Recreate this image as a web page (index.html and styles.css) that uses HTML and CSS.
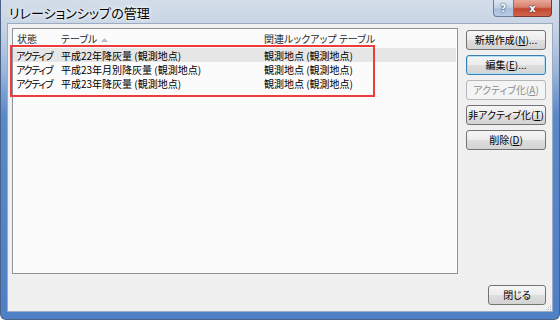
FILE: index.html
```html
<!DOCTYPE html>
<html lang="ja">
	<head>
		<meta charset="UTF-8" />
		<meta name="viewport" content="width=device-width, initial-scale=1.0" />
		<title>リレーションシップの管理</title>
		<link rel="stylesheet" href="styles.css">
	</head>
	<body>
		<div class="window">
			<div class="titleBar">
				<span class="titleText">リレーションシップの管理</span>
				<div class="captionButtons">
					<span class="captionHelp">?</span>
					<span class="captionClose">x</span>
				</div>
			</div>
			<div class="client">
				<div class="mainRow">
					<div class="listBox">
						<div class="listRow listHeader">
							<span>状態</span>
							<span>テーブル<svg class="sortArrow" width="7" height="4" viewBox="0 0 7 4"><path d="M0 4 L3.5 0 L7 4 Z" /></svg></span>
							<span>関連ルックアップ テーブル</span>
						</div>
						<div class="listRow selected">
							<span class="stateCell">アクティブ</span>
							<span>平成22年降灰量 (観測地点)</span>
							<span>観測地点 (観測地点)</span>
						</div>
						<div class="listRow">
							<span class="stateCell">アクティブ</span>
							<span>平成23年月別降灰量 (観測地点)</span>
							<span>観測地点 (観測地点)</span>
						</div>
						<div class="listRow">
							<span class="stateCell">アクティブ</span>
							<span>平成23年降灰量 (観測地点)</span>
							<span>観測地点 (観測地点)</span>
						</div>
						<div class="markBox"></div>
					</div>
					<div class="buttonColumn">
						<button class="btn">新規作成(<u>N</u>)...</button>
						<button class="btn focused">編集(<u>E</u>)...</button>
						<button class="btn" disabled>アクティブ化(<u>A</u>)</button>
						<button class="btn">非アクティブ化(<u>T</u>)</button>
						<button class="btn">削除(<u>D</u>)</button>
					</div>
				</div>
				<div class="footerRow">
					<button class="btn closeBtn">閉じる</button>
				</div>
				<svg class="sizeGrip" width="5" height="5" viewBox="0 0 5 5">
					<rect x="4" y="0" width="1" height="1" />
					<rect x="2" y="2" width="1" height="1" />
					<rect x="4" y="2" width="1" height="1" />
					<rect x="0" y="4" width="1" height="1" />
					<rect x="2" y="4" width="1" height="1" />
					<rect x="4" y="4" width="1" height="1" />
				</svg>
			</div>
		</div>
	</body>
</html>
```

FILE: styles.css
```css
html,
body {
	margin: 0;
	padding: 0;
}

body {
	width: 560px;
	height: 320px;
	overflow: hidden;
	font-family: "Noto Sans CJK JP", "Noto Sans", sans-serif;
	font-feature-settings: "palt";
	background: #ffffff;
}

.window {
	box-sizing: border-box;
	width: 560px;
	height: 320px;
	padding: 0 6px 7px 6px;
	display: flex;
	flex-direction: column;
	border: 1px solid #4a6286;
	border-top: none;
	border-radius: 0 0 6px 6px;
	background: linear-gradient(#d3dde9 0, #c6d3e4 30px, #9db6d9 70px, #5b88c9 115px, #4f7fc5 100%);
}

.titleBar {
	height: 24px;
	margin: 0 -5px;
	padding: 0 6px 0 7px;
	display: flex;
	align-items: flex-start;
}

.titleText {
	margin-top: 4px;
	font-size: 13px;
	line-height: 17px;
	color: #000000;
	text-shadow: 0 0 6px #ffffff, 0 0 3px #ffffff;
}

.captionButtons {
	margin-left: auto;
	display: flex;
	height: 17px;
}

.captionHelp,
.captionClose {
	box-sizing: border-box;
	height: 17px;
	display: flex;
	align-items: center;
	justify-content: center;
	font-family: "DejaVu Sans", sans-serif;
	font-weight: bold;
	font-size: 10px;
	color: #ffffff;
	text-shadow: 0 0 2px #2b3c58, 0 0 1px #2b3c58;
}

.captionHelp {
	width: 21px;
	border: 1px solid #6b7f9c;
	border-top: none;
	border-radius: 0 0 0 4px;
	background: linear-gradient(#dce6f2 0%, #c4d3e6 45%, #a9bfdb 55%, #b8cbe3 100%);
}

.captionClose {
	width: 38px;
	border: 1px solid #7a3a33;
	border-top: none;
	border-left: none;
	border-radius: 0 0 4px 0;
	background: linear-gradient(#e8a89a 0%, #d7806d 45%, #c4462f 55%, #d0664c 100%);
}

.client {
	position: relative;
	flex: 1;
	padding: 4px 6px 6px 4px;
	display: flex;
	flex-direction: column;
	border: 1px solid #9aabc3;
	background: #f0f0f0;
}

.mainRow {
	display: flex;
	height: 246px;
}

.listBox {
	position: relative;
	box-sizing: border-box;
	width: 448px;
	height: 246px;
	border: 1px solid #8e949c;
	background: #fbfbfb;
}

.listRow {
	display: grid;
	grid-template-columns: 45px 203px 1fr;
	height: 14px;
	padding-left: 3px;
	font-size: 10px;
	line-height: 15px;
	color: #000000;
	white-space: nowrap;
}

.stateCell {
	letter-spacing: -1.3px;
}

.listHeader {
	height: 19px;
	line-height: 20px;
	padding-left: 4px;
	grid-template-columns: 44px 203px 1fr;
	color: #2a2a2a;
}

.selected {
	background: #e6e6e6;
	margin-right: 1px;
}

.sortArrow {
	margin-left: 4px;
	vertical-align: 1px;
	fill: #b7bec9;
}

.markBox {
	position: absolute;
	left: -3px;
	top: 16px;
	box-sizing: border-box;
	width: 365px;
	height: 52px;
	border: 2px solid #ee3b3b;
}

.buttonColumn {
	margin-left: 8px;
	padding-top: 2px;
	display: flex;
	flex-direction: column;
	gap: 5px;
}

.btn {
	box-sizing: border-box;
	width: 80px;
	height: 20px;
	padding: 0;
	border: 1px solid #737373;
	border-radius: 3px;
	background: linear-gradient(#f6f6f6 0%, #ececec 48%, #dedede 52%, #d3d3d3 100%);
	font-family: "Noto Sans CJK JP", "Noto Sans", sans-serif;
	font-feature-settings: "palt";
	font-size: 10px;
	line-height: 18px;
	color: #000000;
	text-align: center;
}

.btn.focused {
	border-color: #3c7fb1;
	box-shadow: inset 0 0 0 1px #aee0f6;
}

.btn:disabled {
	border-color: #b3b8bb;
	background: #f4f4f4;
	color: #8e8e8e;
}

.footerRow {
	margin-top: 11px;
	display: flex;
	justify-content: flex-end;
}

.closeBtn {
	width: 58px;
}

.sizeGrip {
	position: absolute;
	right: 1px;
	bottom: 1px;
	fill: #b9bec6;
}
```
